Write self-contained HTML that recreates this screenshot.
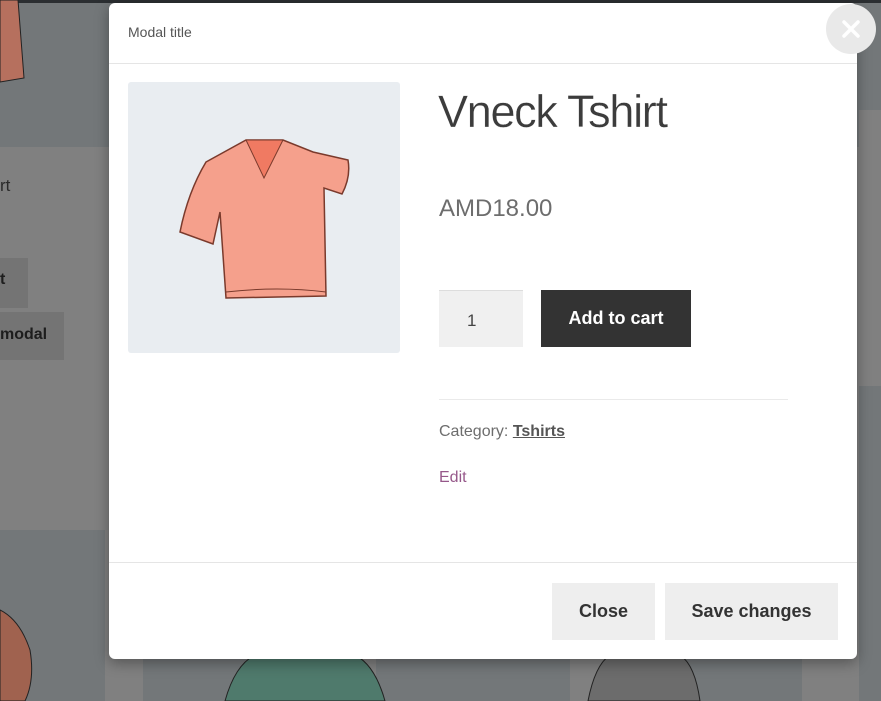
<!DOCTYPE html>
<html><head><meta charset="utf-8"><style>
*{margin:0;padding:0;box-sizing:border-box}
body{width:881px;height:701px;overflow:hidden;position:relative;background:#808080;font-family:"Liberation Sans",sans-serif}
.b{position:absolute}
.d{background:#737779}
.modal{position:absolute;left:109px;top:3px;width:748px;height:656px;background:#fff;border-radius:6px;box-shadow:0 4px 14px rgba(0,0,0,.35)}
.btn{position:absolute;background:#eee;color:#333;font-weight:bold;font-size:18px;display:flex;align-items:center;justify-content:center}
</style></head><body>
<div class="b d" style="left:0;top:0;width:881px;height:147px"></div>
<div class="b" style="left:0;top:0;width:881px;height:3px;background:#2b2e31"></div>
<div class="b" style="left:859px;top:110px;width:22px;height:276px;background:#808080"></div>
<div class="b d" style="left:0;top:530px;width:105px;height:171px"></div>
<div class="b d" style="left:143px;top:530px;width:194px;height:171px"></div>
<div class="b d" style="left:376px;top:530px;width:194px;height:171px"></div>
<div class="b d" style="left:608px;top:530px;width:194px;height:171px"></div>
<div class="b d" style="left:859px;top:386px;width:22px;height:315px"></div>
<div class="b" style="left:0;top:176px;font-size:17px;color:#2a2a2a">rt</div>
<div class="b" style="left:0;top:258px;width:28px;height:50px;background:#747474"></div>
<div class="b" style="left:0;top:271px;font-size:16px;font-weight:bold;color:#1d1d1d">t</div>
<div class="b" style="left:0;top:312px;width:64px;height:48px;background:#747474"></div>
<div class="b" style="left:0;top:326px;font-size:16px;font-weight:bold;color:#1d1d1d">modal</div>
<div class="b" style="left:0;top:0;width:30px;height:85px;">
<svg width="30" height="85"><path d="M0 0 L18 0 L24 78 L0 82Z" fill="#b6705e" stroke="#222" stroke-width="1"/></svg></div>
<svg class="b" style="left:215px;top:655px" width="180" height="46"><path d="M10 46 Q20 10 40 0 L140 0 Q160 10 170 46Z" fill="#4f7a6c" stroke="#222"/></svg>
<svg class="b" style="left:580px;top:655px" width="130" height="46"><path d="M8 46 Q15 10 30 0 L100 0 Q115 10 120 46Z" fill="#6c6c6c" stroke="#222"/></svg>
<svg class="b" style="left:0;top:600px" width="40" height="101"><path d="M0 10 Q20 20 30 50 Q35 80 25 101 L0 101Z" fill="#a0624f" stroke="#222"/></svg>

<div class="modal">
<div class="b" style="left:19px;top:21px;font-size:14px;color:#555">Modal title</div>
<div class="b" style="left:0;top:60px;width:748px;height:1px;background:#e5e5e5"></div>
<div class="b" style="left:19px;top:79px;width:272px;height:271px;background:#e9edf1;border-radius:3px">
<svg width="272" height="271" viewBox="0 0 272 271"><path d="M78 80 L118 58 L155 58 L185 70 L220 78 Q223 95 214 112 L196 106 L198 214 L98 216 L92 130 L85 162 L52 150 Q60 110 78 80Z" fill="#f5a08c" stroke="#7a3a2c" stroke-width="1.5"/><path d="M118 58 L136 96 L155 58 Z" fill="#f07a62" stroke="#7a3a2c"/><path d="M98 210 Q150 204 198 210" fill="none" stroke="#7a3a2c"/></svg></div>
<div class="b" style="left:329px;top:83px;font-size:45px;color:#3c3c3c;letter-spacing:-1.3px;white-space:nowrap;-webkit-text-stroke:0.3px #fff">Vneck Tshirt</div>
<div class="b" style="left:330px;top:192px;font-size:24px;color:#6d6d6d">AMD18.00</div>
<div class="b" style="left:330px;top:287px;width:84px;height:57px;background:#f0f0f0;border-top:1px solid #ddd;font-size:17px;color:#444;padding:20px 0 0 28px">1</div>
<div class="b" style="left:432px;top:287px;width:150px;height:57px;background:#333;color:#fff;font-weight:bold;font-size:18px;display:flex;align-items:center;justify-content:center">Add to cart</div>
<div class="b" style="left:330px;top:396px;width:349px;height:1px;background:#eaeaea"></div>
<div class="b" style="left:330px;top:420px;font-size:16px;color:#6d6d6d">Category: <b style="text-decoration:underline;color:#555">Tshirts</b></div>
<div class="b" style="left:330px;top:466px;font-size:16px;color:#96588a">Edit</div>
<div class="b" style="left:0;top:559px;width:748px;height:1px;background:#e5e5e5"></div>
<div class="btn" style="left:443px;top:580px;width:103px;height:57px">Close</div>
<div class="btn" style="left:556px;top:580px;width:173px;height:57px">Save changes</div>
</div>
<div class="b" style="left:826px;top:4px;width:50px;height:50px;border-radius:50%;background:#e9e9e9;display:flex;align-items:center;justify-content:center">
<svg width="18" height="18"><path d="M2 2L16 16M16 2L2 16" stroke="#fff" stroke-width="3.5" stroke-linecap="round"/></svg></div>
</body></html>
